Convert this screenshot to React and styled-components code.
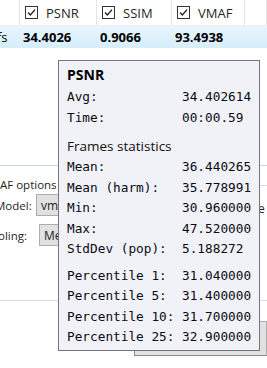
import React from 'react';
import styled, { createGlobalStyle } from 'styled-components';

const Global = createGlobalStyle`
  html, body { margin: 0; padding: 0; background: #fff; }
  body { font-family: "Open Sans", "Noto Sans", sans-serif; color: #1e1e1e; overflow: hidden; }
`;

const Screen = styled.div`
  position: relative;
  width: 267px;
  height: 368px;
  overflow: hidden;
  background: #fff;
`;

const Grid = styled.div`
  display: grid;
  grid-template-columns: 20px 77px 75px 73px 1fr;
  height: ${p => p.h}px;
  background: ${p => p.bg || '#fff'};
  border-bottom: 1px solid ${p => p.line || '#e5e5e5'};
`;

const HeadCell = styled.div`
  display: flex;
  align-items: center;
  border-right: 1px solid #e5e5e5;
  padding-left: 5px;
  font-size: 13px;
  color: #262626;
`;

const ValueCell = styled.div`
  display: flex;
  align-items: center;
  padding-left: 3px;
  font-size: 13px;
  font-weight: 700;
  color: #000;
  white-space: nowrap;
  overflow: hidden;
`;

const Box = styled.span`
  width: 11px;
  height: 11px;
  border: 1px solid #333;
  background: #fff;
  display: flex;
  align-items: center;
  justify-content: center;
  margin-right: 8px;
`;

const Check = () => (
  <Box>
    <svg width="11" height="11" viewBox="0 0 11 11">
      <path d="M2 5.5 L4.4 8 L9 2.6" fill="none" stroke="#222" strokeWidth="1.4" />
    </svg>
  </Box>
);

const Blank = styled.div`
  height: 116px;
  border-bottom: 1px solid #c4d8ea;
`;

const Group = styled.div`
  margin: 19px 0 0 -10px;
  width: 290px;
  height: 114px;
  border-top: 1px solid #dcdcdc;
  border-bottom: 1px solid #dcdcdc;
  position: relative;
`;

const Legend = styled.div`
  margin-top: -10px;
  padding-left: 10px;
  font-size: 11.5px;
  line-height: 18px;
  background: #fff;
  width: 60px;
`;

const FieldRow = styled.div`
  display: flex;
  align-items: center;
  margin-top: ${p => p.mt}px;
  padding-left: 8px;
  font-size: 11.5px;
  height: 24px;
`;

const Label = styled.span`
  width: 41px;
`;

const Combo = styled.div`
  width: 190px;
  height: 22px;
  box-sizing: border-box;
  background: #e1e1e1;
  border: 1px solid #adadad;
  padding-left: 4px;
  display: flex;
  align-items: center;
  font-size: 12px;
`;

const Tail = styled.span`
  margin-left: 32px;
  margin-top: 6px;
  font-size: 12px;
`;

const ButtonRow = styled.div`
  margin-top: 20px;
  padding-left: 134px;
  display: flex;
`;

const Button = styled.div`
  width: 160px;
  height: 35px;
  box-sizing: border-box;
  background: #e1e1e1;
  border: 1px solid #adadad;
  border-left-color: #8a8a8a;
  border-bottom-color: #8a8a8a;
`;

const Tip = styled.div`
  position: absolute;
  left: 58px;
  top: 60px;
  width: 202px;
  height: 291px;
  box-sizing: border-box;
  background: #f1f2f7;
  border: 1px solid #767676;
  padding: 4px 8px 0 8px;
`;

const TipTitle = styled.div`
  font-weight: 700;
  font-size: 14px;
  line-height: 20px;
  color: #000;
  margin-bottom: 2px;
`;

const TipHeading = styled.div`
  font-size: 13.5px;
  line-height: 20px;
  color: #111;
  margin: 8px 0 1px;
`;

const Stats = styled.div`
  display: grid;
  grid-template-columns: 115px 1fr;
  font-family: "DejaVu Sans Mono", "Liberation Mono", monospace;
  font-size: 12.75px;
  line-height: 20.5px;
  color: #0a0a14;
  margin-top: ${p => p.mt || 0}px;
  white-space: pre;
`;

const overall = [['Avg:', '34.402614'], ['Time:', '00:00.59']];
const frames = [
  ['Mean:', '36.440265'],
  ['Mean (harm):', '35.778991'],
  ['Min:', '30.960000'],
  ['Max:', '47.520000'],
  ['StdDev (pop):', '5.188272'],
];
const pct = [
  ['Percentile 1:', '31.040000'],
  ['Percentile 5:', '31.400000'],
  ['Percentile 10:', '31.700000'],
  ['Percentile 25:', '32.900000'],
];

const StatRows = ({ rows, mt }) => (
  <Stats mt={mt}>
    {rows.map(([k, v]) => (
      <React.Fragment key={k}>
        <span>{k}</span>
        <span>{v}</span>
      </React.Fragment>
    ))}
  </Stats>
);

export default function App() {
  return (
    <Screen>
      <Global />
      <Grid h={25} line="#f0f0f0">
        <HeadCell />
        <HeadCell><Check />PSNR</HeadCell>
        <HeadCell><Check />SSIM</HeadCell>
        <HeadCell><Check />VMAF</HeadCell>
        <HeadCell />
      </Grid>
      <Grid h={22} bg="linear-gradient(#e8f5fd, #d6eefb)" line="#fff">
        <ValueCell style={{ paddingLeft: 0, fontWeight: 400, marginLeft: -3 }}>fs</ValueCell>
        <ValueCell>34.4026</ValueCell>
        <ValueCell>0.9066</ValueCell>
        <ValueCell>93.4938</ValueCell>
        <ValueCell />
      </Grid>
      <Blank />
      <Group>
        <Legend>AF options</Legend>
        <FieldRow mt={-1}>
          <Label style={{ marginLeft: -3 }}>Model:</Label>
          <Combo>vmaf</Combo>
          <Tail>e</Tail>
        </FieldRow>
        <FieldRow mt={6}>
          <Label>oling:</Label>
          <Combo>Mean</Combo>
        </FieldRow>
      </Group>
      <ButtonRow>
        <Button />
      </ButtonRow>
      <Tip>
        <TipTitle>PSNR</TipTitle>
        <StatRows rows={overall} />
        <TipHeading>Frames statistics</TipHeading>
        <StatRows rows={frames} />
        <StatRows rows={pct} mt={6} />
      </Tip>
    </Screen>
  );
}
